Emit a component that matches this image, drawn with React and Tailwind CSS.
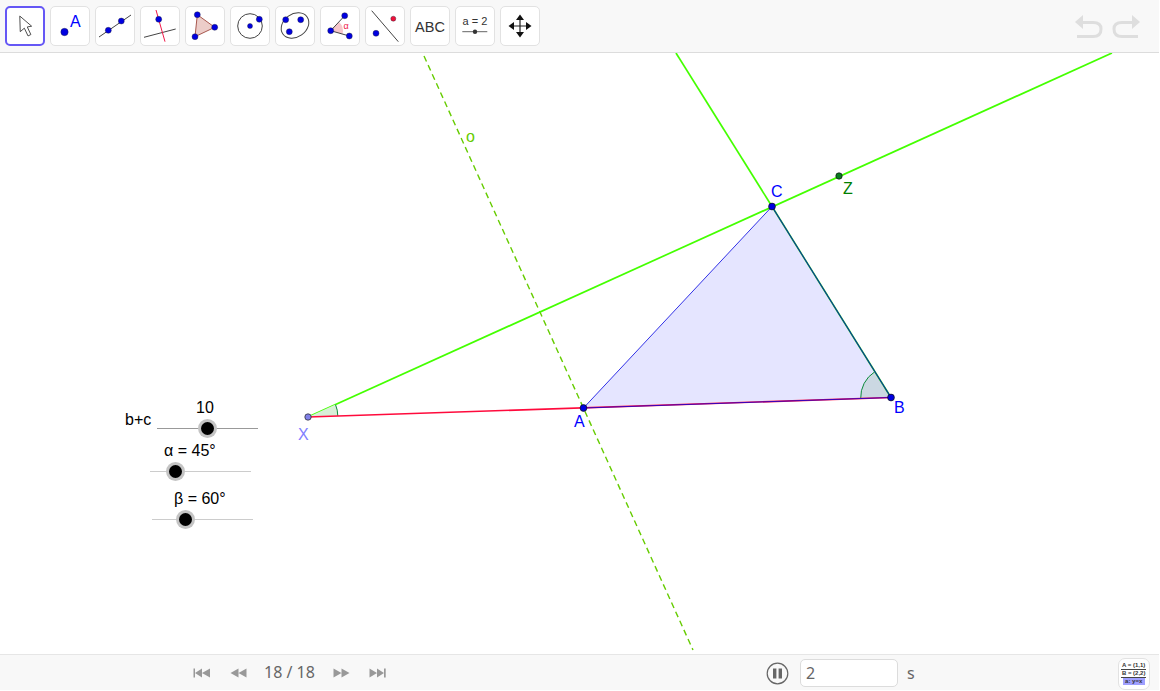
import React from "react"

const BLUE = "#0000e0"

function Dot({ x, y, r = 3, fill = BLUE }) {
  return <circle cx={x} cy={y} r={r} fill={fill} stroke="#223" strokeWidth="0.4" />
}

function ToolIcon({ children }) {
  return (
    <svg width="38" height="38" viewBox="1 1 38 38" className="block">
      {children}
    </svg>
  )
}

const tools = [
  <ToolIcon key="move">
    <path d="M14.5 9.5 L15 26 L19.3 22.3 L23.2 30.5 L26.2 29 L22.4 21 L27 20.2 Z" fill="#fff" stroke="#444" strokeWidth="1" strokeLinejoin="round" />
  </ToolIcon>,
  <ToolIcon key="point">
    <Dot x={14.5} y={26} r={3.7} />
    <text x={20} y={20.5} fontSize="16" fill="#0000ff" fontFamily="Liberation Sans, sans-serif">A</text>
  </ToolIcon>,
  <ToolIcon key="line">
    <line x1="4" y1="31" x2="36" y2="9" stroke="#444" strokeWidth="1" />
    <Dot x={13.3} y={24.3} />
    <Dot x={26.3} y={15} />
  </ToolIcon>,
  <ToolIcon key="perp">
    <line x1="4" y1="31.3" x2="35.7" y2="23" stroke="#444" strokeWidth="1" />
    <line x1="16" y1="4" x2="25" y2="35.7" stroke="#f01848" strokeWidth="1" />
    <Dot x={18.7} y={13.3} />
  </ToolIcon>,
  <ToolIcon key="poly">
    <polygon points="12.3,8.7 29.7,21.3 10,30.7" fill="#eccdc9" stroke="#a8584f" strokeWidth="1" />
    <Dot x={12.3} y={8.7} />
    <Dot x={29.7} y={21.3} />
    <Dot x={10} y={30.7} />
  </ToolIcon>,
  <ToolIcon key="circle">
    <circle cx="20" cy="20" r="12.3" fill="none" stroke="#444" strokeWidth="1" />
    <Dot x={20} y={20} r={2.5} />
    <Dot x={29.3} y={13.3} />
  </ToolIcon>,
  <ToolIcon key="ellipse">
    <ellipse cx="20" cy="19.5" rx="14.8" ry="11.5" transform="rotate(-35 20 19.5)" fill="none" stroke="#444" strokeWidth="1" />
    <Dot x={10.7} y={13.7} />
    <Dot x={25.7} y={13.7} />
    <Dot x={14.3} y={25.7} />
  </ToolIcon>,
  <ToolIcon key="angle">
    <path d="M10.7 24.7 L19 16 A12 12 0 0 1 22.5 28 Z" fill="#f6c6ca" stroke="none" />
    <path d="M24.7 9.7 L10.7 24.7 L29.3 30" fill="none" stroke="#444" strokeWidth="1" />
    <Dot x={10.7} y={24.7} />
    <Dot x={24.7} y={9.7} />
    <Dot x={29.3} y={30} />
    <text x={23.5} y={23} fontSize="9" fill="#f01848" fontFamily="Liberation Sans, sans-serif">α</text>
  </ToolIcon>,
  <ToolIcon key="reflect">
    <line x1="6.7" y1="4.7" x2="33.3" y2="35.7" stroke="#444" strokeWidth="1" />
    <Dot x={11} y={27.3} />
    <Dot x={28.3} y={12.7} r={2.5} fill="#f0103a" />
  </ToolIcon>,
  <ToolIcon key="text">
    <text x={20} y={25.5} fontSize="14.5" fill="#333" textAnchor="middle" fontFamily="Liberation Sans, sans-serif">ABC</text>
  </ToolIcon>,
  <ToolIcon key="slider">
    <text x={20} y={19} fontSize="11" fill="#333" textAnchor="middle" fontFamily="Liberation Sans, sans-serif">a = 2</text>
    <line x1="7.3" y1="25.7" x2="32.3" y2="25.7" stroke="#666" strokeWidth="1" />
    <circle cx="20" cy="25.7" r="2.2" fill="#333" />
  </ToolIcon>,
  <ToolIcon key="pan">
    <path d="M20 11 V29 M11 20 H29" stroke="#222" strokeWidth="1.2" />
    <path d="M20 8.5 L24 14 H16 Z M20 31.5 L24 26 H16 Z M8.5 20 L14 16 V24 Z M31.5 20 L26 16 V24 Z" fill="#111" />
  </ToolIcon>,
]

function SeekIcon({ d }) {
  return (
    <svg width="18" height="12" viewBox="0 0 18 12" className="block">
      <path d={d} fill="#999" />
    </svg>
  )
}

function Slider({ pos, label, labelPos, line, dot }) {
  return (
    <>
      <span className={`absolute text-[16px] leading-none text-black whitespace-nowrap ${labelPos}`}>{label}</span>
      <div className={`absolute h-px w-[101px] ${line} ${pos}`}>
        <div className={`absolute top-[-9px] h-[19px] w-[19px] rounded-full bg-[#c4c4c4] flex items-center justify-center ${dot}`}>
          <div className="h-[13px] w-[13px] rounded-full bg-black" />
        </div>
      </div>
    </>
  )
}

function Canvas() {
  return (
    <div className="relative flex-1 bg-white overflow-hidden">
      <svg width="1160" height="601" viewBox="0 53 1160 601" className="absolute inset-0 block">
        <line x1="424" y1="56" x2="693" y2="650" stroke="#66cc00" strokeWidth="1.4" strokeDasharray="6 4" />
        <line x1="308" y1="417" x2="1112" y2="53" stroke="#44ff00" strokeWidth="1.7" />
        <line x1="772" y1="206.5" x2="676" y2="53" stroke="#44ff00" strokeWidth="1.7" />
        <path d="M308 417 L337.8 415.9 A30 30 0 0 0 335.5 404.6 Z" fill="#d8efd8" stroke="none" />
        <path d="M337.8 415.9 A30 30 0 0 0 335.5 404.6" fill="none" stroke="#0a8a3a" strokeWidth="1" />
        <polygon points="583.5,408 891,397.5 772,206.5" fill="#0000ff" fillOpacity="0.1" stroke="none" />
        <path d="M891 397.5 L860.7 398.5 A30.3 30.3 0 0 1 874.6 371.9 Z" fill="#cbd8e2" stroke="none" />
        <path d="M860.7 398.5 A30.3 30.3 0 0 1 874.6 371.9" fill="none" stroke="#0a8a3a" strokeWidth="1" />
        <line x1="308" y1="417" x2="891" y2="397.5" stroke="#ff0a3c" strokeWidth="1.7" />
        <line x1="772" y1="206.5" x2="891" y2="397.5" stroke="#14b414" strokeWidth="1.6" />
        <polyline points="891,397.5 772,206.5 583.5,408 891,397.5" fill="none" stroke="#0000e0" strokeWidth="0.8" />
        <circle cx="308" cy="417" r="3.2" fill="#8080e8" stroke="#222" strokeWidth="0.7" />
        <circle cx="583.5" cy="408" r="3.4" fill={BLUE} stroke="#111" strokeWidth="0.7" />
        <circle cx="891" cy="397.5" r="3.4" fill={BLUE} stroke="#111" strokeWidth="0.7" />
        <circle cx="772" cy="206.5" r="3.4" fill={BLUE} stroke="#111" strokeWidth="0.7" />
        <circle cx="839" cy="176" r="3.2" fill="#0a7a20" stroke="#111" strokeWidth="0.7" />
      </svg>

      <span className="absolute left-[466px] top-[76px] text-[16px] leading-none text-[#66cc00]">o</span>
      <span className="absolute left-[771px] top-[131px] text-[16px] leading-none text-[#0000ff]">C</span>
      <span className="absolute left-[843px] top-[128px] text-[16px] leading-none text-[#008000]">Z</span>
      <span className="absolute left-[298px] top-[374px] text-[16px] leading-none text-[#8080ff]">X</span>
      <span className="absolute left-[574px] top-[361px] text-[16px] leading-none text-[#0000ff]">A</span>
      <span className="absolute left-[894px] top-[347px] text-[16px] leading-none text-[#0000ff]">B</span>

      <span className="absolute left-[125px] top-[359px] text-[16px] leading-none text-black">b+c</span>
      <Slider pos="left-[157px] top-[375px]" label="10" labelPos="left-[196px] top-[347px]" line="bg-[#999]" dot="left-[41px]" />
      <Slider pos="left-[150px] top-[418px]" label="α = 45°" labelPos="left-[164px] top-[390px]" line="bg-[#ccc]" dot="left-[16px]" />
      <Slider pos="left-[152px] top-[466px]" label="β = 60°" labelPos="left-[174px] top-[438px]" line="bg-[#ccc]" dot="left-[24px]" />
    </div>
  )
}

export default function App() {
  return (
    <div className="flex h-[690px] w-[1159px] flex-col bg-white font-['Liberation_Sans',sans-serif]">
      <div className="flex h-[53px] items-start justify-between border-b border-[#dcdcdc] bg-[#f8f8f8] pl-[5px] pr-[18px] pt-[6px]">
        <div className="flex gap-[5px]">
          {tools.map((icon, i) => (
            <button
              key={i}
              className={
                i === 0
                  ? "flex h-10 w-10 items-center justify-center rounded-[5px] border-2 border-[#6557f5] bg-white"
                  : "flex h-10 w-10 items-center justify-center rounded-[5px] border border-[#e2e2e2] bg-white"
              }
            >
              {icon}
            </button>
          ))}
        </div>
        <div className="flex gap-[7px] pt-[8px]">
          <svg width="30" height="26" viewBox="0 0 30 26" className="block">
            <path d="M9 8.5 H19 Q27 8.5 27 15 Q27 22.5 19 22.5 H3" fill="none" stroke="#dedede" strokeWidth="3" />
            <path d="M1 8 L9 1 V15 Z" fill="#dedede" />
          </svg>
          <svg width="30" height="26" viewBox="0 0 30 26" className="block">
            <path d="M21 8.5 H11 Q3 8.5 3 15 Q3 22.5 11 22.5 H27" fill="none" stroke="#dedede" strokeWidth="3" />
            <path d="M29 8 L21 1 V15 Z" fill="#dedede" />
          </svg>
        </div>
      </div>

      <Canvas />

      <div className="flex h-[36px] items-center border-t border-[#e6e6e6] bg-[#f8f8f8] pl-[193px] text-[#666]">
        <div className="flex w-[54px] items-center"><SeekIcon d="M0.5 1.5 H2 V10.5 H0.5 Z M2 6 L9 1.5 V10.5 Z M9 6 L17 1.5 V10.5 Z" /></div>
        <div className="flex w-[34px] items-center -ml-[17px]"><SeekIcon d="M0.5 6 L8.5 1.5 V10.5 Z M8.5 6 L16.5 1.5 V10.5 Z" /></div>
        <span className="mb-[2px] w-[69px] font-['Noto_Sans',sans-serif] text-[16px] leading-none">18 / 18</span>
        <div className="flex w-[36px] items-center"><SeekIcon d="M0.5 1.5 L8.5 6 L0.5 10.5 Z M8.5 1.5 L16.5 6 L8.5 10.5 Z" /></div>
        <SeekIcon d="M0.5 1.5 L8 6 L0.5 10.5 Z M8 1.5 L15 6 L8 10.5 Z M15 1.5 H16.7 V10.5 H15 Z" />
        <svg width="23" height="23" viewBox="0 0 23 23" className="ml-[379px] mt-[2px] block">
          <circle cx="11.5" cy="11.5" r="10.3" fill="#f8f8f8" stroke="#666" strokeWidth="1.2" />
          <rect x="7" y="6.5" width="3.4" height="10" fill="#666" />
          <rect x="12.6" y="6.5" width="3.4" height="10" fill="#666" />
        </svg>
        <div className="ml-[11px] flex h-[28px] w-[98px] items-center rounded-[5px] border border-[#dcdcdc] bg-white pl-[5px] font-['Noto_Sans',sans-serif] text-[16px] leading-none">2</div>
        <span className="ml-[9px] font-['Noto_Sans',sans-serif] text-[16px] leading-none">s</span>
        <div className="ml-[203px] mt-[2px] flex h-[32px] w-[32px] flex-col items-center justify-center rounded-[7px] border border-[#e2e2e2] bg-white text-[6px] font-bold leading-[7px] text-[#333]">
          <span className="border-b border-[#444] px-[1px]">A = (1,1)</span>
          <span className="border-b border-[#444] px-[1px]">B = (2,2)</span>
          <span className="w-[22px] bg-[#a0a0ff] text-center">a: y=x</span>
        </div>
      </div>
    </div>
  )
}
